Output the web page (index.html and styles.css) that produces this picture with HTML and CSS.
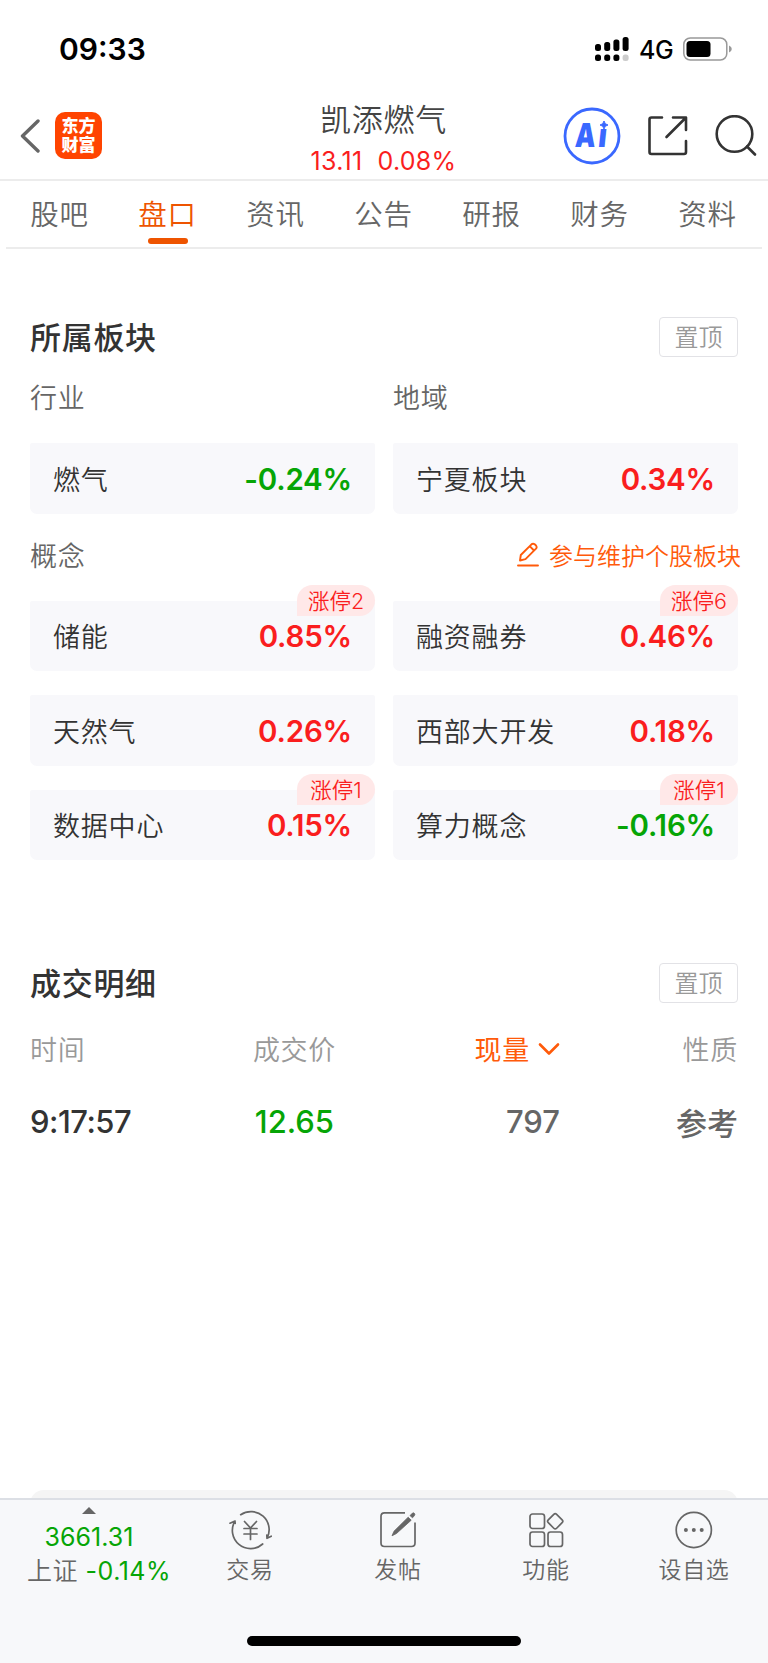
FILE: index.html
```html
<!DOCTYPE html>
<html lang="zh-CN">
<head>
<meta charset="UTF-8">
<meta name="viewport" content="width=device-width, initial-scale=1.0">
<title>凯添燃气</title>
<link rel="stylesheet" href="styles.css">
</head>
<body>
  <div class="status-bar">
    <span class="time">09:33</span>
    <div class="status-icons">
      <svg class="signal" width="34" height="26" viewBox="0 0 34 26">
        <rect x="0" y="8" width="6" height="7" rx="2.500"/>
        <rect x="9.200" y="6" width="6" height="9" rx="2.500"/>
        <rect x="18.400" y="3.500" width="6" height="11.500" rx="2.500"/>
        <rect x="27.600" y="1" width="6" height="14" rx="2.500"/>
        <rect x="0" y="18.500" width="6" height="6.500" rx="2.500"/>
        <rect x="9.200" y="18.500" width="6" height="6.500" rx="2.500"/>
        <rect x="18.400" y="18.500" width="6" height="6.500" rx="2.500"/>
        <rect x="27.600" y="18.500" width="6" height="6.500" rx="2.500" fill="#ccc"/>
      </svg>
      <span class="network">4G</span>
      <svg width="50" height="24" viewBox="0 0 50 24">
        <rect x="0.800" y="1" width="43" height="22" rx="6.500" fill="none" stroke="#999" stroke-width="1.500"/>
        <rect x="3.500" y="4" width="24" height="16" rx="3.500"/>
        <path d="M46 8.500Q48.800 9.500 48.800 12T46 15.500Z" fill="#999"/>
      </svg>
    </div>
  </div>

  <header>
    <div class="header-left">
      <svg width="20" height="36" viewBox="0 0 20 36">
        <path d="M18 3L2.500 18L18 33" fill="none" stroke="#666" stroke-width="3.400" stroke-linecap="round" stroke-linejoin="round"/>
      </svg>
      <div class="logo">东方<br>财富</div>
    </div>
    <div class="stock">
      <h1>凯添燃气</h1>
      <p><span>13.11</span><span>0.08%</span></p>
    </div>
    <div class="header-right">
      <svg width="58" height="58" viewBox="0 0 58 58">
        <circle cx="29" cy="29" r="27" fill="none" stroke="#3a68ff" stroke-width="2.800"/>
        <text class="ai" transform="translate(11.500 39.500) skewX(-4) scale(0.78 1)">A</text>
        <text class="ai" transform="translate(34.500 39.500) skewX(-6) scale(0.85 1)">ı</text>
        <path d="M41 14Q41.600 17.500 45 18Q41.600 18.500 41 22Q40.400 18.500 37 18Q40.400 17.500 41 14Z" fill="#3a68ff" stroke="#3a68ff"/>
      </svg>
      <svg width="42" height="42" viewBox="0 0 42 42" fill="none" stroke="#333" stroke-width="2.600" stroke-linecap="round" stroke-linejoin="round">
        <path d="M15 2.500H4.500Q2.500 2.500 2.500 4.500V37Q2.500 39 4.500 39H37Q39 39 39 37V26M26 2.500H39V15M38.500 3L19.500 22"/>
      </svg>
      <svg width="42" height="42" viewBox="0 0 42 42" fill="none" stroke="#333" stroke-width="2.600" stroke-linecap="round">
        <circle cx="19.500" cy="19" r="17.800"/>
        <path d="M32 31.500L40 39.500"/>
      </svg>
    </div>
  </header>

  <nav>
    <a>股吧</a>
    <a class="active">盘口</a>
    <a>资讯</a>
    <a>公告</a>
    <a>研报</a>
    <a>财务</a>
    <a>资料</a>
  </nav>

  <main>
    <section class="plates">
      <div class="section-title">
        <h2>所属板块</h2>
        <button type="button">置顶</button>
      </div>
      <div class="labels">
        <span>行业</span>
        <span>地域</span>
      </div>
      <div class="cards">
        <div class="card"><span>燃气</span><b class="down">-0.24%</b></div>
        <div class="card"><span>宁夏板块</span><b>0.34%</b></div>
      </div>
      <div class="concept">
        <span>概念</span>
        <a class="edit">
          <svg width="22" height="25" viewBox="0 0 22 25" fill="none" stroke="#ff5a0a" stroke-width="1.900" stroke-linecap="round" stroke-linejoin="round">
            <path d="M3 18.500L3.800 13L14.500 2.300Q16 1 17.700 2.300L19 3.500Q20.300 5.200 19 6.700L8.500 17.200ZM12.700 4.200L17 8.500M1 23.500H21"/>
          </svg>
          参与维护个股板块
        </a>
      </div>
      <div class="cards">
        <div class="card"><span>储能</span><b>0.85%</b><i class="badge">涨停2</i></div>
        <div class="card"><span>融资融券</span><b>0.46%</b><i class="badge">涨停6</i></div>
        <div class="card"><span>天然气</span><b>0.26%</b></div>
        <div class="card"><span>西部大开发</span><b>0.18%</b></div>
        <div class="card"><span>数据中心</span><b>0.15%</b><i class="badge">涨停1</i></div>
        <div class="card"><span>算力概念</span><b class="down">-0.16%</b><i class="badge">涨停1</i></div>
      </div>
    </section>

    <section class="deals">
      <div class="section-title">
        <h2>成交明细</h2>
        <button type="button">置顶</button>
      </div>
      <div class="row row-head">
        <span>时间</span>
        <span>成交价</span>
        <span class="sort">现量
          <svg width="22" height="14" viewBox="0 0 22 14"><path d="M2 2.500L11 11.500L20 2.500" fill="none" stroke="#ff5a0a" stroke-width="2.600" stroke-linecap="round" stroke-linejoin="round"/></svg>
        </span>
        <span>性质</span>
      </div>
      <div class="row">
        <span class="clock">9:17:57</span>
        <span class="down">12.65</span>
        <span class="grey">797</span>
        <span class="grey">参考</span>
      </div>
    </section>
    <div class="next-card"></div>
  </main>

  <footer>
    <div class="toolbar">
      <div class="index">
        <svg width="14" height="7" viewBox="0 0 14 7"><path d="M7 0L14 7H0Z" fill="#666"/></svg>
        <span class="down point">3661.31</span>
        <span class="change">上证 <em class="down">-0.14%</em></span>
      </div>
      <a class="tool">
        <svg width="44" height="40" viewBox="0 0 44 40" fill="none" stroke="#666" stroke-width="1.700" stroke-linecap="round" stroke-linejoin="round">
          <path d="M12.700 4.700A18.200 18.200 0 0 1 39 28.300L43.300 26.200M39 28.300L38.800 25M34.700 34A18.200 18.200 0 0 1 7 11L2 13.200M7 11L7.200 13.500"/>
          <path d="M16.500 11.500L22.500 18L28.500 11.500M22.500 18V29.500M16 18.500H29M16 24H29"/>
        </svg>
        交易
      </a>
      <a class="tool">
        <svg width="44" height="40" viewBox="0 0 44 40" fill="none" stroke="#666" stroke-width="1.700">
          <path d="M29 2.800H8.500Q5 2.800 5 6.300V33Q5 36.500 8.500 36.500H35.500Q39 36.500 39 33V12.500"/>
          <path d="M32.200 7.200L35.200 10.200L20.500 23.500L16 25.800L18 21.200ZM34 5.600L36.600 3Q37.800 2.500 38.500 3.500Q39.200 4.500 38.500 5.500L36.500 7.800Z" fill="#666" stroke-width="0.800"/>
        </svg>
        发帖
      </a>
      <a class="tool">
        <svg width="44" height="40" viewBox="0 0 44 40" fill="none" stroke="#666" stroke-width="1.700">
          <rect x="6" y="4" width="14.500" height="14.500" rx="2.500"/>
          <rect x="6" y="22" width="14.500" height="14.500" rx="2.500"/>
          <rect x="24" y="22" width="14.500" height="14.500" rx="2.500"/>
          <rect x="25.300" y="5.400" width="11.800" height="11.800" rx="2" transform="rotate(45 31.200 11.300)"/>
        </svg>
        功能
      </a>
      <a class="tool">
        <svg width="44" height="40" viewBox="0 0 44 40" fill="none" stroke="#666" stroke-width="1.700">
          <circle cx="21.800" cy="20" r="17.600"/>
          <g fill="#666" stroke="none"><circle cx="13.900" cy="20" r="2"/><circle cx="21.800" cy="20" r="2"/><circle cx="29.700" cy="20" r="2"/></g>
        </svg>
        设自选
      </a>
    </div>
    <div class="home-bar"></div>
  </footer>
</body>
</html>
```
FILE: styles.css
```css
* {
  box-sizing: border-box;
}
body {
  margin: 0;
  width: 768px;
  height: 1663px;
  display: flex;
  flex-direction: column;
  background-color: #fff;
  color: #333;
  font-family: Inter, "Noto Sans CJK SC", sans-serif;
  font-weight: 350;
}
h1, h2, p {
  margin: 0;
}
svg {
  display: block;
  flex: none;
}
b {
  font-weight: 600;
}
i, em {
  font-style: normal;
}

/* Status bar */
.status-bar {
  height: 94px;
  padding: 4px 35px 0 59px;
  display: flex;
  align-items: center;
  justify-content: space-between;
  color: #000;
}
.time {
  font-size: 30px;
  font-weight: 600;
}
.status-icons {
  display: flex;
  align-items: center;
}
.network {
  margin: 2px 11px 0 10px;
  width: 33px;
  font-size: 25px;
  font-weight: 500;
  letter-spacing: -0.5px;
}

/* Header */
header {
  height: 87px;
  padding: 0 11px 0 20px;
  display: grid;
  grid-template-columns: 1fr 160px 1fr;
  border-bottom: 2px solid #ececec;
}
.header-left, .header-right {
  display: flex;
  align-items: center;
  padding-bottom: 4px;
}
.header-left {
  gap: 15px;
}
.logo {
  width: 47px;
  height: 47px;
  padding-top: 5px;
  border-radius: 10px;
  background-color: #ff4400;
  color: #fff;
  font-size: 17px;
  font-weight: 900;
  line-height: 18.500px;
  text-align: center;
}
.stock {
  margin: 0 -15px 0 -25px;
  text-align: center;
  white-space: nowrap;
}
.stock h1 {
  padding-top: 4px;
  font-size: 31px;
  font-weight: 350;
  line-height: 43px;
  letter-spacing: 0.7px;
  color: #444;
}
.stock p {
  display: flex;
  justify-content: center;
  gap: 15px;
  font-size: 25px;
  font-weight: 400;
  line-height: 40px;
  letter-spacing: 0.3px;
  color: #fa1e1e;
}
.header-right {
  justify-content: flex-end;
  gap: 26px;
}
.ai {
  font-family: Inter, sans-serif;
  font-size: 33px;
  font-weight: 900;
  fill: #3a68ff;
}

/* Tabs */
nav {
  height: 68px;
  margin: 0 6px;
  display: grid;
  grid-template-columns: repeat(7, 108px);
  border-bottom: 2px solid #ececec;
}
nav a {
  display: flex;
  flex-direction: column;
  align-items: center;
  padding-right: 1px;
  font-size: 28.500px;
  line-height: 68px;
  height: 66px;
  letter-spacing: 0.8px;
  color: #666;
}
nav .active {
  color: #ee5400;
}
nav .active::after {
  content: "";
  width: 40px;
  height: 6px;
  margin-top: -11px;
  border-radius: 3px;
  background-color: #ee5400;
}

main {
  flex: 1;
  display: flex;
  flex-direction: column;
  padding: 67px 30px 0;
}
.section-title {
  height: 41px;
  display: flex;
  align-items: center;
  justify-content: space-between;
}
.section-title h2 {
  padding-bottom: 3px;
  font-size: 31px;
  font-weight: 500;
  letter-spacing: 0.7px;
}
.section-title button {
  width: 79px;
  height: 40px;
  padding: 0 0 2px;
  border: 1.500px solid #e2e2e6;
  border-radius: 4px;
  background-color: #fff;
  color: #999;
  font: inherit;
  font-size: 24px;
}

/* Plates */
.labels, .cards {
  display: grid;
  grid-template-columns: 345px 345px;
  column-gap: 18px;
}
.labels, .concept, .row-head {
  font-size: 27px;
  letter-spacing: 0.7px;
  color: #666;
}
.labels {
  height: 86px;
  line-height: 84px;
}
.cards {
  row-gap: 24px;
}
.card {
  position: relative;
  height: 70.500px;
  padding: 0 23px;
  display: flex;
  align-items: center;
  justify-content: space-between;
  border-radius: 2px 2px 7px 7px;
  background-color: #f8f8fb;
  font-size: 27px;
  letter-spacing: 0.8px;
}
.card b {
  padding-top: 1px;
  font-size: 29.500px;
  letter-spacing: -0.2px;
  color: #fa1e1e;
}
.badge {
  position: absolute;
  top: -16px;
  right: 0;
  width: 78px;
  height: 31px;
  border-radius: 16px 16px 16px 0;
  background-color: #ffe8e8;
  color: #fa1e1e;
  font-size: 21.500px;
  letter-spacing: 0;
  line-height: 32px;
  text-align: center;
}
.down, .card .down {
  color: #06a506;
}
.concept {
  height: 87px;
  margin-right: -3px;
  padding-bottom: 5px;
  display: flex;
  align-items: center;
  justify-content: space-between;
}
.edit {
  display: flex;
  align-items: center;
  gap: 10px;
  font-size: 24px;
  letter-spacing: 0;
  color: #ff5a0a;
}

/* Deals */
.deals {
  margin-top: 102px;
}
.row {
  height: 54px;
  display: grid;
  grid-template-columns: 160px 144px 226px 1fr;
  align-items: center;
  font-size: 31px;
  font-weight: 500;
}
.row span {
  text-align: right;
}
.row span:first-child {
  text-align: left;
}
.row .clock {
  letter-spacing: -0.5px;
}
.row-head {
  height: 91px;
  grid-template-columns: 160px 146px 224px 1fr;
  font-size: 27px;
  font-weight: 350;
  color: #999;
}
.row .sort {
  display: flex;
  align-items: center;
  justify-content: flex-end;
  gap: 8px;
  font-weight: 400;
  color: #ff5a0a;
}
.grey {
  color: #666;
}
.next-card {
  height: 20px;
  margin: auto 0 -12px;
  border-radius: 14px 14px 0 0;
  background-color: #f5f5f5;
}

/* Bottom bar */
footer {
  height: 165px;
  border-top: 2px solid #dcdfe5;
  background-color: #f7f8fa;
}
.toolbar {
  height: 136px;
  display: grid;
  grid-template-columns: 176px repeat(4, 148px);
  color: #666;
}
.index {
  display: flex;
  flex-direction: column;
  align-items: center;
  padding: 7px 0 0 2px;
  font-size: 25px;
  line-height: 34px;
  white-space: nowrap;
}
.index .down {
  font-weight: 400;
}
.change {
  margin-left: 20px;
  letter-spacing: 0.5px;
}
.point {
  margin-top: 6px;
}
.tool {
  display: flex;
  flex-direction: column;
  align-items: center;
  padding-top: 10px;
  font-size: 23px;
  line-height: 40px;
  letter-spacing: 0.7px;
}
.home-bar {
  width: 274px;
  height: 10px;
  margin: 0 auto;
  border-radius: 5px;
  background-color: #000;
}
```
